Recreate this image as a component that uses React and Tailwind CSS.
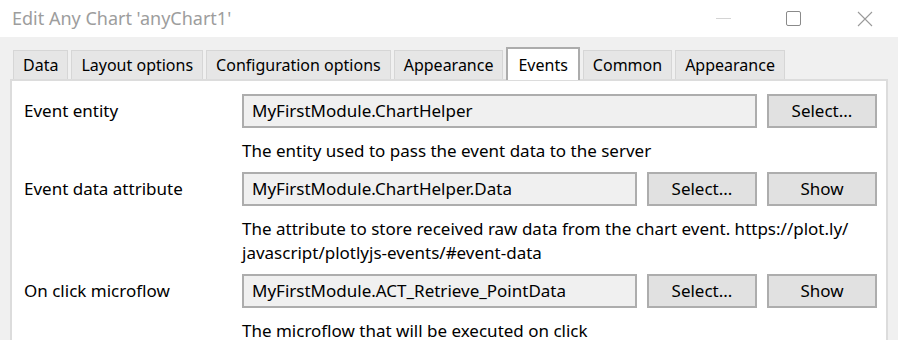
import React from "react"

const FONT = { fontFamily: '"Noto Sans", "Open Sans", sans-serif' }

function Tab({ label, active }) {
  if (active) {
    return (
      <div className="relative z-10 -mb-[1px] flex h-[33px] items-center border-2 border-b-0 border-[#acacac] bg-white px-[10px] text-black">
        {label}
      </div>
    )
  }
  return (
    <div className="flex h-[29px] items-center border border-b-0 border-[#d6d6d6] bg-[#e6e6e6] px-[9px] text-black">
      {label}
    </div>
  )
}

function Field({ value }) {
  return (
    <div className="flex h-[34px] flex-1 items-center border-2 border-[#adadad] bg-[#f0f0f0] pl-[8px] text-black">
      {value}
    </div>
  )
}

function Btn({ children }) {
  return (
    <div className="ml-[10px] flex h-[34px] w-[110px] items-center justify-center border-2 border-[#adadad] bg-[#e1e1e1] text-black">
      {children}
    </div>
  )
}

function Row({ label, value, buttons, help }) {
  return (
    <div>
      <div className="flex items-center">
        <div className="w-[218px] text-black">{label}</div>
        <Field value={value} />
        {buttons.map((b) => (
          <Btn key={b}>{b}</Btn>
        ))}
      </div>
      <div className="mt-[11px] mb-[9px] pl-[218px] leading-[24px] text-black">{help}</div>
    </div>
  )
}

export default function App() {
  return (
    <div className="h-[340px] w-[898px] overflow-hidden bg-[#f0f0f0] text-[17px]" style={FONT}>
      {/* title bar */}
      <div className="flex h-[37px] items-center bg-white">
        <div className="pl-[12px] text-[18px] text-[#9d9d9d]">Edit Any Chart 'anyChart1'</div>
        <div className="ml-auto flex items-center">
          <div className="mr-[55px] h-px w-[15px] bg-[#d4d4d4]" />
          <div className="mr-[56px] h-[15px] w-[15px] rounded-[2px] border border-[#8a8a8a]" />
          <svg width="16" height="16" viewBox="0 0 16 16" className="mr-[25px]">
            <path d="M1 1 L15 15 M15 1 L1 15" stroke="#9a9a9a" strokeWidth="1.1" fill="none" />
          </svg>
        </div>
      </div>

      {/* tabs */}
      <div className="flex items-end gap-[3px] pl-[13px] pt-[10px] text-[16px]">
        <Tab label="Data" />
        <Tab label="Layout options" />
        <Tab label="Configuration options" />
        <Tab label="Appearance" />
        <Tab label="Events" active />
        <Tab label="Common" />
        <Tab label="Appearance" />
      </div>

      {/* panel */}
      <div className="mx-[10px] h-[300px] border-2 border-[#dcdcdc] bg-white pl-[12px] pr-[9px] pt-[13px]">
        <Row
          label="Event entity"
          value="MyFirstModule.ChartHelper"
          buttons={["Select..."]}
          help="The entity used to pass the event data to the server"
        />
        <Row
          label="Event data attribute"
          value="MyFirstModule.ChartHelper.Data"
          buttons={["Select...", "Show"]}
          help={
            <>
              <div className="whitespace-nowrap">
                The attribute to store received raw data from the chart event. https://plot.ly/
              </div>
              <div className="whitespace-nowrap">javascript/plotlyjs-events/#event-data</div>
            </>
          }
        />
        <Row
          label="On click microflow"
          value="MyFirstModule.ACT_Retrieve_PointData"
          buttons={["Select...", "Show"]}
          help="The microflow that will be executed on click"
        />
      </div>
    </div>
  )
}
